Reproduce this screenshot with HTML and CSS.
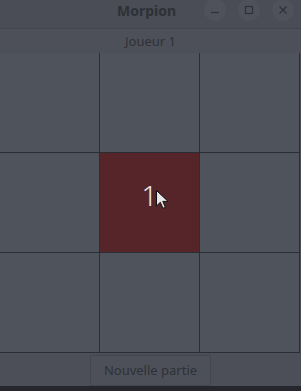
FILE: index.html
```html
<!DOCTYPE html>
<html lang="fr">
<head>
  <meta charset="UTF-8">
  <title>Morpion</title>
  <link rel="stylesheet" href="styles.css">
</head>
<body>

<div class="window">
  <header class="titlebar">
    <span class="title">Morpion</span>
    <div class="controls">
      <span class="ctl">
        <svg width="10" height="10" viewBox="0 0 10 10"><path d="M1 7.5h8" stroke="#2e3137" stroke-width="1.2"/></svg>
      </span>
      <span class="ctl">
        <svg width="10" height="10" viewBox="0 0 10 10"><rect x="1.5" y="1.5" width="7" height="7" fill="none" stroke="#2e3137" stroke-width="1.2"/></svg>
      </span>
      <span class="ctl">
        <svg width="10" height="10" viewBox="0 0 10 10"><path d="M1.5 1.5l7 7M8.5 1.5l-7 7" stroke="#2e3137" stroke-width="1.2"/></svg>
      </span>
    </div>
  </header>

  <div class="status">Joueur 1</div>

  <main class="board">
    <div class="cell"></div>
    <div class="cell"></div>
    <div class="cell"></div>
    <div class="cell"></div>
    <div class="cell active">1
      <svg class="cursor" width="13" height="19" viewBox="0 0 13 19">
        <path d="M0.5 0.5v15.5l3.8-3.7 2.7 6 2.4-1-2.6-5.9h5.3z" fill="#e6e6e6" stroke="#111" stroke-width="1"/>
      </svg>
    </div>
    <div class="cell"></div>
    <div class="cell"></div>
    <div class="cell"></div>
    <div class="cell"></div>
  </main>

  <footer class="footer">
    <button class="new-game">Nouvelle partie</button>
  </footer>
</div>

</body>
</html>
```

FILE: styles.css
```css
body {
  margin: 0;
  background: #26262e;
  font-family: "Noto Sans", "Open Sans", sans-serif;
  color: #2e3137;
}
.window {
  width: 301px;
  height: 386px;
  background: #4c4f58;
  display: flex;
  flex-direction: column;
}
.titlebar {
  height: 29px;
  position: relative;
  display: flex;
  align-items: center;
  justify-content: center;
  background: #4a4d56;
  border-bottom: 1px solid #42454d;
  box-sizing: border-box;
}
.title {
  font-size: 14px;
  font-weight: bold;
  margin-top: -8px;
  margin-left: -8px;
}
.controls {
  position: absolute;
  top: -1px;
  right: 7px;
  display: flex;
  gap: 12px;
}
.ctl {
  width: 22px;
  height: 22px;
  border-radius: 50%;
  background: #4f525b;
  display: flex;
  align-items: center;
  justify-content: center;
}
.status {
  height: 24px;
  display: flex;
  align-items: center;
  justify-content: center;
  font-size: 13px;
  background: #4d5059;
  padding-bottom: 1px;
  box-sizing: border-box;
}
.board {
  display: grid;
  grid-template-columns: repeat(3, 100px);
  grid-template-rows: repeat(3, 100px);
}
.cell {
  background: #4f535b;
  border-right: 1px solid #2a2d34;
  border-bottom: 1px solid #2a2d34;
  box-sizing: border-box;
}
.active {
  position: relative;
  background: #552529;
  color: #e8e8ee;
  font-size: 28px;
  font-weight: 300;
  display: flex;
  align-items: center;
  justify-content: center;
  padding-bottom: 16px;
}
.cursor {
  position: absolute;
  left: 56px;
  top: 37px;
}
.footer {
  flex: 1;
  display: flex;
  justify-content: center;
  align-items: center;
  padding-top: 1px;
}
.new-game {
  width: 121px;
  height: 31px;
  background: #4d5059;
  border: 1px solid #43464e;
  color: #2e3137;
  font-family: "Noto Sans", "Open Sans", sans-serif;
  font-size: 13px;
  padding: 0;
}
```
